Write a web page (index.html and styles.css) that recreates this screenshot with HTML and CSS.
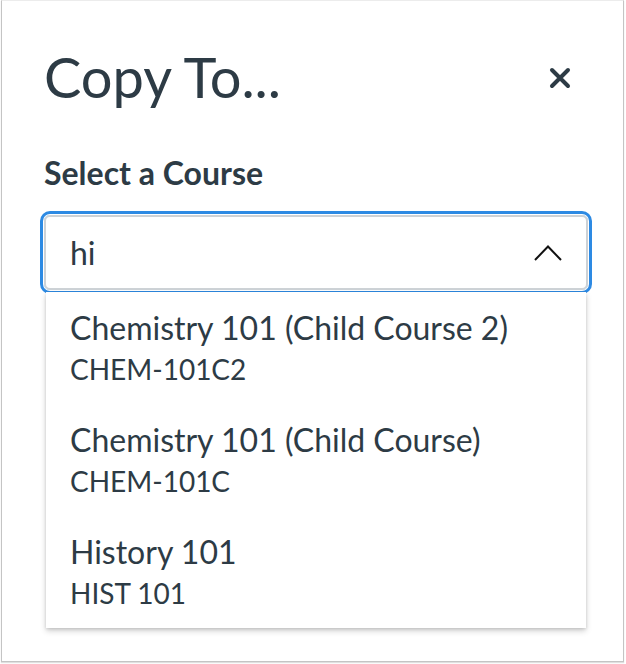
FILE: index.html
```html
<!DOCTYPE html>
<html>
<head>
<meta charset="utf-8">
<link rel="stylesheet" href="styles.css">
</head>
<body>
<div class="window">
  <div class="header">
    <h1 class="title">Copy To...</h1>
    <button class="close" aria-label="Close">
      <svg width="22" height="22" viewBox="0 0 22 22"><path d="M3 3 L19 19 M19 3 L3 19" stroke="#2D3B45" stroke-width="4" stroke-linecap="round"/></svg>
    </button>
  </div>
  <label class="label">Select a Course</label>
  <div class="combo">
    <div class="input">
      <span class="value">hi</span>
      <svg class="chev" width="28" height="17" viewBox="0 0 28 17"><path d="M1 16 L14 2.5 L27 16" fill="none" stroke="#111" stroke-width="2"/></svg>
    </div>
    <ul class="menu">
      <li class="option"><div class="name">Chemistry 101 (Child Course 2)</div><div class="code">CHEM-101C2</div></li>
      <li class="option"><div class="name">Chemistry 101 (Child Course)</div><div class="code">CHEM-101C</div></li>
      <li class="option"><div class="name">History 101</div><div class="code">HIST 101</div></li>
    </ul>
  </div>
</div>
</body>
</html>
```
FILE: styles.css
```css
html, body { margin: 0; padding: 0; background: #ffffff; }
body { padding: 0 2px 2px 1px; font-family: Lato, "Liberation Sans", sans-serif; color: #2D3B45; }
.window {
  height: 662px;
  box-sizing: border-box;
  border: 1px solid #c4c4c4;
  border-top-color: #ececec;
  box-shadow: 0 1px 1px rgba(0,0,0,0.12);
  padding: 0 35px 0 42px;
  background: #fff;
}
.header { display: flex; justify-content: space-between; align-items: center; padding-top: 42px; }
.title { margin: 0; font-size: 56px; font-weight: 400; line-height: 67px; }
.close { border: 0; background: none; padding: 0; margin-right: 17px; margin-top: 2px; display: flex; }
.label { display: block; margin-top: 44px; font-size: 32px; font-weight: 700; line-height: 38px; }
.combo { position: relative; margin-top: 23px; }
.input {
  height: 75px; box-sizing: border-box;
  border: 2px solid #cdd2d6; border-radius: 6px;
  box-shadow: 0 0 0 1px #fff, 0 0 0 4px #2d8ae3;
  display: flex; align-items: center; justify-content: space-between;
  padding: 0 24px 0 24px;
}
.value { font-size: 32px; line-height: 38px; }
.chev { display: block; }
.menu {
  position: absolute; left: 2px; right: 2px; top: 77px;
  margin: 0; padding: 0; list-style: none;
  background: #fff;
  box-shadow: 0 3px 6px rgba(0,0,0,0.18), 0 1px 3px rgba(0,0,0,0.12);
}
.option { padding: 15px 24px 15px; }
.name { font-size: 32px; line-height: 42px; }
.code { font-size: 28px; line-height: 40px; }
```
